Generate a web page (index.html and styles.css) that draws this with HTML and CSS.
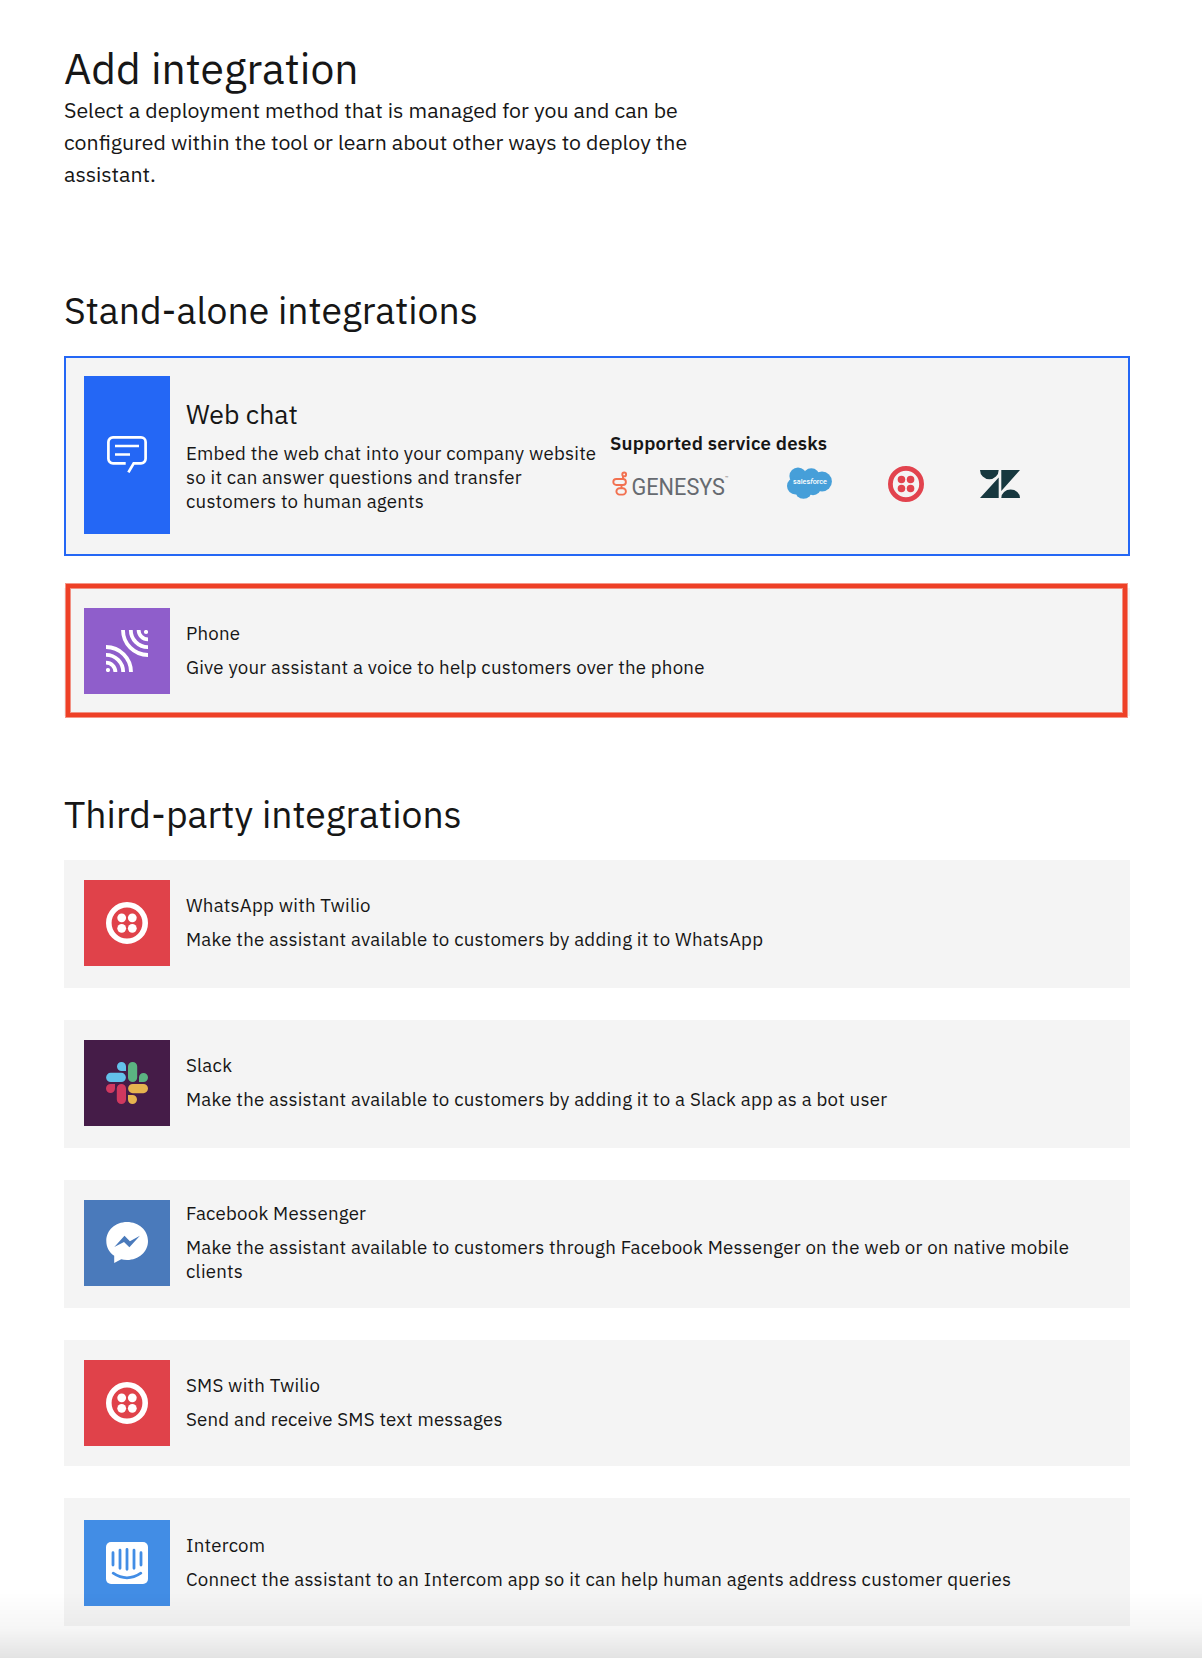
FILE: index.html
```html
<!DOCTYPE html>
<html lang="en">
<head>
<meta charset="utf-8">
<title>Add integration</title>
<link rel="stylesheet" href="styles.css">
</head>
<body>
<svg class="defs" aria-hidden="true">
  <symbol id="twilio" viewBox="0 0 42 42">
    <circle cx="21" cy="21" r="18.2" fill="none" stroke="currentColor" stroke-width="5.6"/>
    <g fill="currentColor"><circle cx="15.7" cy="15.8" r="4.4"/><circle cx="26.3" cy="15.8" r="4.4"/><circle cx="15.7" cy="26.3" r="4.4"/><circle cx="26.3" cy="26.3" r="4.4"/></g>
  </symbol>
</svg>
<main class="page">
  <header class="intro">
    <h1 class="title">Add integration</h1>
    <p class="lead">Select a deployment method that is managed for you and can be configured within the tool or learn about other ways to deploy the assistant.</p>
  </header>

  <section class="group">
    <h2 class="heading">Stand-alone integrations</h2>
    <article class="card card-featured">
      <div class="tile tile-chat">
        <svg width="40" height="38" viewBox="0 0 40 38" fill="none" stroke="#fff" stroke-width="2.7"><path d="M18.7 27.3H6A4.6 4.6 0 0 1 1.4 22.7V6A4.6 4.6 0 0 1 6 1.4H34A4.6 4.6 0 0 1 38.6 6V22.7A4.6 4.6 0 0 1 34 27.3H26.7L21.4 36.4M8 10H32M8 18.5H23"/></svg>
      </div>
      <div class="text">
        <h3 class="name name-large">Web chat</h3>
        <p class="desc">Embed the web chat into your company website so it can answer questions and transfer customers to human agents</p>
      </div>
      <div class="desks">
        <h4 class="desks-title">Supported service desks</h4>
        <div class="logos">
          <svg class="logo-genesys" width="121" height="36" viewBox="0 -4 121 36">
            <g fill="none" stroke="#f2704f" stroke-width="1.9"><circle cx="14.2" cy="4.4" r="1.9"/><rect x="3.3" y="9" width="12.6" height="6" rx="3"/><rect x="6.4" y="18.2" width="9.5" height="6.4" rx="3.2"/><path d="M13 6v3M11.5 15v3"/></g>
            <text class="genesys" x="21.5" y="24.5" textLength="93.5" lengthAdjust="spacingAndGlyphs">GENESYS</text>
            <text class="mark" x="115" y="10">™</text>
          </svg>
          <svg class="logo-salesforce" width="45" height="32" viewBox="0 0 45 32">
            <g fill="#469fd9"><circle cx="11" cy="9" r="8.6"/><circle cx="24.3" cy="9.6" r="8.4"/><circle cx="35" cy="14.5" r="9.9"/><circle cx="8.5" cy="19" r="8.5"/><circle cx="16.5" cy="23" r="8.7"/><circle cx="26" cy="20" r="8.2"/></g>
            <text class="salesforce" x="6" y="17" textLength="34" lengthAdjust="spacingAndGlyphs">sales<tspan font-style="italic">f</tspan>orce</text>
          </svg>
          <svg class="logo-twilio" width="36" height="36"><use href="#twilio"/></svg>
          <svg width="40" height="28" viewBox="0 0 40 28" fill="#17383f"><path d="M0 0H18.7A9.35 9.2 0 0 1 0 0ZM18.7 7.4V28H0ZM21.3 0H40L21.3 21ZM21.3 28A9.35 8.4 0 0 1 40 28Z"/></svg>
        </div>
      </div>
    </article>
    <article class="card card-marked">
      <div class="tile tile-phone">
        <svg width="42" height="42" viewBox="0 0 42 42" fill="none" stroke="#fff" stroke-width="3.8"><path d="M0 17A25 25 0 0 1 25 42M0 24.8A17.2 17.2 0 0 1 17.2 42M0 32.6A9.4 9.4 0 0 1 9.4 42M17 0A25 25 0 0 0 42 25M24.8 0A17.2 17.2 0 0 0 42 17.2M32.6 0A9.4 9.4 0 0 0 42 9.4"/><g fill="#fff" stroke="none"><circle cx="2" cy="40" r="2.1"/><circle cx="40" cy="2" r="2.1"/></g></svg>
      </div>
      <div class="text">
        <h3 class="name">Phone</h3>
        <p class="desc">Give your assistant a voice to help customers over the phone</p>
      </div>
    </article>
  </section>

  <section class="group group-third">
    <h2 class="heading">Third-party integrations</h2>
    <article class="card">
      <div class="tile tile-twilio"><svg width="42" height="42"><use href="#twilio"/></svg></div>
      <div class="text">
        <h3 class="name">WhatsApp with Twilio</h3>
        <p class="desc">Make the assistant available to customers by adding it to WhatsApp</p>
      </div>
    </article>
    <article class="card">
      <div class="tile tile-slack">
        <svg width="42" height="42" viewBox="0 0 42 42">
          <path fill="#63c1ea" d="M20 9H15.5A4.5 4.5 0 1 1 20 4.5ZM4.7 10.8H15.3A4.6 4.6 0 0 1 15.3 20H4.7A4.6 4.6 0 0 1 4.7 10.8Z"/>
          <path fill="#5bb381" d="M22 4.6A4.6 4.6 0 0 1 31.2 4.6V15.4A4.6 4.6 0 0 1 22 15.4ZM33 20V15.5A4.5 4.5 0 1 1 37.5 20Z"/>
          <path fill="#d0385f" d="M9 22V26.5A4.5 4.5 0 1 1 4.5 22ZM10.8 26.6A4.6 4.6 0 0 1 20 26.6V37.4A4.6 4.6 0 0 1 10.8 37.4Z"/>
          <path fill="#e6b44f" d="M26.7 22H37.4A4.6 4.6 0 0 1 37.4 31.2H26.7A4.6 4.6 0 0 1 26.7 22ZM22 33H26.5A4.5 4.5 0 1 1 22 37.5Z"/>
        </svg>
      </div>
      <div class="text">
        <h3 class="name">Slack</h3>
        <p class="desc">Make the assistant available to customers by adding it to a Slack app as a bot user</p>
      </div>
    </article>
    <article class="card">
      <div class="tile tile-messenger">
        <svg width="42" height="42" viewBox="0 0 42 42"><path fill="#fff" fill-rule="evenodd" d="M21 0C32.8 0 42 8.3 42 19S32.8 38 21 38Q17.8 38 15.2 37.3L8.2 41V33.8C3.2 30.4 .3 25.2 .3 19 .3 8.3 9.2 0 21 0ZM8.3 25 18.5 13.8 23.9 19.2 33.9 13.8 23.4 25.2 18 19.9Z"/></svg>
      </div>
      <div class="text">
        <h3 class="name">Facebook Messenger</h3>
        <p class="desc">Make the assistant available to customers through Facebook Messenger on the web or on native mobile clients</p>
      </div>
    </article>
    <article class="card card-short">
      <div class="tile tile-twilio"><svg width="42" height="42"><use href="#twilio"/></svg></div>
      <div class="text">
        <h3 class="name">SMS with Twilio</h3>
        <p class="desc">Send and receive SMS text messages</p>
      </div>
    </article>
    <article class="card card-last">
      <div class="tile tile-intercom">
        <svg width="42" height="42" viewBox="0 0 42 42"><rect width="42" height="42" rx="5" fill="#fff"/><path fill="none" stroke="#428de5" stroke-width="2.8" stroke-linecap="round" d="M7 10.7V23M14 8.2V26.3M21 7.4V27.3M28 8.2V26.3M35 10.7V23M7.2 31.2Q21 40.5 34.8 31.2"/></svg>
      </div>
      <div class="text">
        <h3 class="name">Intercom</h3>
        <p class="desc">Connect the assistant to an Intercom app so it can help human agents address customer queries</p>
      </div>
    </article>
  </section>
</main>
<div class="fade"></div>
</body>
</html>
```
FILE: styles.css
```css
* { box-sizing: border-box; }
body { margin: 0; background: #fff; color: #161616; font-family: "IBM Plex Sans", Roboto, "Liberation Sans", sans-serif; }
h1, h2, h3, h4, p { margin: 0; font-weight: 400; }
svg { display: block; flex: none; }
.defs { display: none; }
.page { height: 1658px; overflow: hidden; padding: 42px 72px 0 64px; }

.intro { height: 243px; }
.title { height: 52px; font-size: 42.67px; line-height: 53px; }
.lead { width: 640px; font-size: 21.33px; line-height: 32px; }

.group { display: flex; flex-direction: column; gap: 32px; }
.group-third { margin-top: 73px; }
.heading { height: 39px; font-size: 37.33px; line-height: 50px; }

.card { display: flex; align-items: flex-start; gap: 16px; height: 128px; padding: 20px; background: #f4f4f4; }
.text { flex: 1; display: flex; flex-direction: column; justify-content: center; gap: 10px; height: 86px; padding-bottom: 2px; }
.name, .desc { font-size: 18.67px; line-height: 24px; letter-spacing: 0.22px; }

.card-featured { height: 200px; padding: 18px; border: 2px solid #2467f5; }
.card-featured .tile, .card-featured .text { height: 158px; }
.card-featured .text { flex: none; width: 412px; gap: 9px; padding-bottom: 1px; }
.name-large { font-size: 26.67px; line-height: 36px; letter-spacing: 0; }
.desks { display: flex; flex-direction: column; gap: 11px; margin-left: -4px; padding-top: 55px; }
.desks-title { font-size: 18.67px; line-height: 24px; font-weight: 600; letter-spacing: 0.213px; }
.logos { display: flex; align-items: center; height: 36px; gap: 56px; }
.logo-genesys { overflow: visible; }
.genesys { font: 400 24.5px Roboto, sans-serif; fill: #666a70; }
.mark { font: 6px Roboto, sans-serif; fill: #777; }
.salesforce { font: 500 8px Roboto, sans-serif; fill: #fff; }
.logo-salesforce { margin-bottom: 2px; }
.logo-twilio { color: #e2434e; }

.card-marked { position: relative; }
.card-marked::after { content: ""; position: absolute; inset: -4px 3px -1px 2px; border: 4px solid #ee4026; box-shadow: 0 0 0 1px rgba(238, 64, 38, 0.55), inset 0 0 0 1px rgba(238, 64, 38, 0.55); }
.card-short { height: 126px; }
.card-last { padding-top: 22px; }

.tile { display: flex; flex: none; align-items: center; justify-content: center; width: 86px; height: 86px; color: #fff; }
.tile-chat { background: #2467f5; }
.tile-phone { background: #8f5ecb; }
.tile-twilio { background: #e0424a; }
.tile-slack { background: #451c48; }
.tile-messenger { background: #4a7abb; }
.tile-intercom { background: #428de5; }

.fade { position: fixed; left: 0; right: 0; bottom: 0; height: 66px; background: linear-gradient(rgba(0, 0, 0, 0), rgba(0, 0, 0, 0.035) 55%, rgba(0, 0, 0, 0.11)); }
```
